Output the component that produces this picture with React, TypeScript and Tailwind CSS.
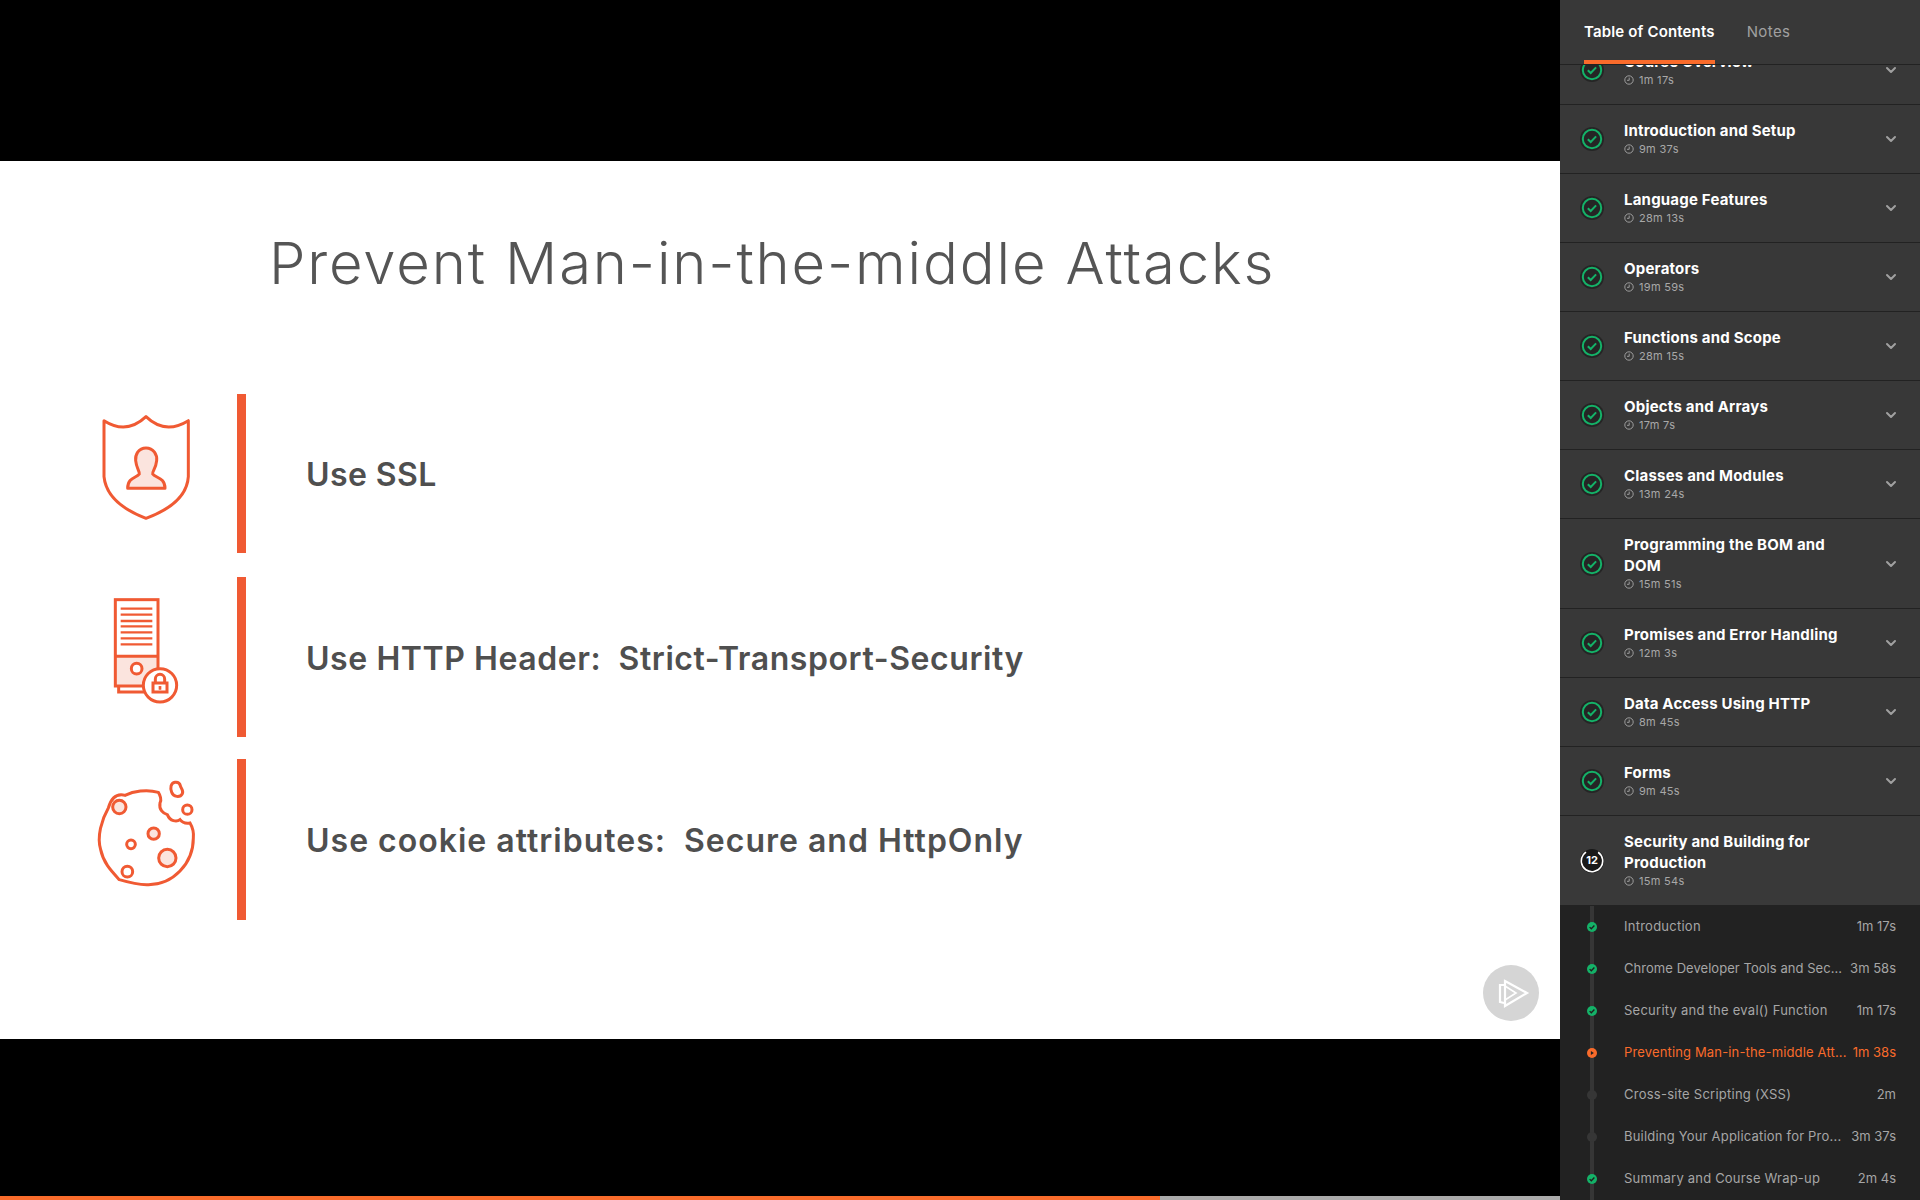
import { ChevronDown } from 'lucide-react';

const FONT = "font-['Inter','Liberation_Sans',sans-serif]";

const SECTIONS = [
  { title: 'Course Overview', time: '1m 17s' },
  { title: 'Introduction and Setup', time: '9m 37s' },
  { title: 'Language Features', time: '28m 13s' },
  { title: 'Operators', time: '19m 59s' },
  { title: 'Functions and Scope', time: '28m 15s' },
  { title: 'Objects and Arrays', time: '17m 7s' },
  { title: 'Classes and Modules', time: '13m 24s' },
  { title: 'Programming the BOM and DOM', time: '15m 51s' },
  { title: 'Promises and Error Handling', time: '12m 3s' },
  { title: 'Data Access Using HTTP', time: '8m 45s' },
  { title: 'Forms', time: '9m 45s' },
];

const CLIPS = [
  { title: 'Introduction', time: '1m 17s', state: 'done', fit: 'tracking-[0.25px]' },
  { title: 'Chrome Developer Tools and Sec...', time: '3m 58s', state: 'done', fit: 'tracking-[0.05px]' },
  { title: 'Security and the eval() Function', time: '1m 17s', state: 'done', fit: 'tracking-[0.25px]' },
  { title: 'Preventing Man-in-the-middle Att...', time: '1m 38s', state: 'current', fit: 'tracking-[0.15px]' },
  { title: 'Cross-site Scripting (XSS)', time: '2m', state: 'todo', fit: 'tracking-[0.25px]' },
  { title: 'Building Your Application for Pro...', time: '3m 37s', state: 'todo', fit: 'tracking-[0.2px]' },
  { title: 'Summary and Course Wrap-up', time: '2m 4s', state: 'done', fit: 'tracking-[0.2px]' },
];

function ClockIcon() {
  return (
    <svg width="10" height="10" viewBox="0 0 10 10" fill="none" stroke="#a8a8a8" strokeWidth="0.9" className="shrink-0">
      <circle cx="5" cy="5" r="4.2" />
      <path d="M5.2 2.6V5.3H3" />
    </svg>
  );
}

function Duration({ time }: { time: string }) {
  return (
    <div className="flex items-center gap-[5px] h-4 text-[11px] tracking-[0.3px] text-[#a8a8a8]">
      <ClockIcon />
      <span>{time}</span>
    </div>
  );
}

function SectionCheck() {
  return (
    <svg width="24" height="24" viewBox="0 0 24 24" fill="none" className="shrink-0">
      <circle cx="12" cy="12" r="12" fill="#252525" />
      <circle cx="12" cy="12" r="9.2" stroke="#14b268" strokeWidth="2" />
      <path d="M7.8 12.2l2.9 2.8 5.4-5.6" stroke="#14b268" strokeWidth="2" />
    </svg>
  );
}

function ProgressRing() {
  return (
    <div className="relative w-6 h-6 shrink-0">
      <svg width="24" height="24" viewBox="0 0 24 24" fill="none">
        <circle cx="12" cy="12" r="12" fill="#191919" />
        <circle cx="12" cy="12" r="10.7" stroke="#ffffff" strokeWidth="1.6" strokeDasharray="54 13.2" transform="rotate(-55 12 12)" />
      </svg>
      <span className="absolute inset-0 flex items-center justify-center text-[11px] font-bold text-white">12</span>
    </div>
  );
}

function ClipDot({ state }: { state: string }) {
  if (state === 'done') {
    return (
      <svg width="10" height="10" viewBox="0 0 10 10" fill="none" className="relative shrink-0">
        <circle cx="5" cy="5" r="5" fill="#14b268" />
        <path d="M2.6 5.1l1.7 1.7 3.1-3.3" stroke="#1f1f1f" strokeWidth="1.3" />
      </svg>
    );
  }
  if (state === 'current') {
    return (
      <svg width="10" height="10" viewBox="0 0 10 10" className="relative shrink-0">
        <circle cx="5" cy="5" r="5" fill="#f96b2b" />
        <path d="M3.9 3l3 2-3 2z" fill="#222222" />
      </svg>
    );
  }
  return <div className="relative w-[10px] h-[10px] rounded-full bg-[#363636] shrink-0" />;
}

function Section({ title, time, open }: { title: string; time: string; open?: boolean }) {
  return (
    <div className={`flex items-center border-b border-[#222222] ${open ? 'bg-[#393939]' : ''}`}>
      <div className="w-16 flex justify-center shrink-0">{open ? <ProgressRing /> : <SectionCheck />}</div>
      <div className="flex-1 pt-[15px] pb-4 pr-[40px]">
        <div className="text-[15px] leading-[21px] font-bold tracking-[0.2px] text-white">{title}</div>
        <Duration time={time} />
      </div>
      {!open && <ChevronDown size={16} strokeWidth={3} color="#a0a0a0" className="mr-[21px] shrink-0" />}
    </div>
  );
}

function Clip({ title, time, state, fit }: { title: string; time: string; state: string; fit: string }) {
  const color = state === 'current' ? 'text-[#f96b2b]' : 'text-[#a6a6a6]';
  return (
    <div className={`flex items-center h-[42px] text-[13px] ${color}`}>
      <div className="w-16 flex justify-center shrink-0"><ClipDot state={state} /></div>
      <span className={`flex-1 min-w-0 whitespace-nowrap ${fit}`}>{title}</span>
      <span className="ml-2 pr-6 whitespace-nowrap">{time}</span>
    </div>
  );
}

function ShieldIcon() {
  return (
    <svg width="156" height="160" viewBox="0 12 468 480" fill="none" stroke="#f05a33" strokeWidth="9" strokeLinejoin="round">
      <path d="M72 92Q140 135 198 80Q255 135 325 92V260Q320 340 198 385Q80 340 72 260Z" />
      <path fill="#fbe4de" d="M198 174C175 174 165 195 167 212C169 235 180 245 178 252C170 264 143 262 143 295H255C255 262 226 264 218 252C216 245 228 235 230 212C232 195 221 174 198 174Z" />
    </svg>
  );
}

function ServerIcon() {
  const lines = [115, 133, 152, 168, 186, 204, 222];
  return (
    <svg width="156" height="160" viewBox="0 20 468 480" fill="none" stroke="#f05a33" strokeWidth="9">
      <rect x="106" y="258" width="128" height="89" fill="#fbe4de" stroke="none" />
      <rect x="106" y="88" width="128" height="259" />
      <path d="M106 258H234M116 347V365H195" />
      {lines.map(y => <path key={y} d={`M122 ${y}H217`} strokeWidth="7" />)}
      <circle cx="170" cy="295" r="16" fill="#ffffff" />
      <circle cx="240" cy="345" r="50" fill="#ffffff" />
      <path d="M226 338V326a14 14 0 0 1 28 0V338" />
      <rect x="219" y="338" width="42" height="27" />
      <rect x="237" y="348" width="6" height="9" fill="#f05a33" strokeWidth="2" />
    </svg>
  );
}

function CookieIcon() {
  return (
    <svg width="156" height="160" viewBox="0 28 468 480" fill="none" stroke="#f05a33" strokeWidth="9">
      <path d="M235 128C200 118 160 125 135 137C115 132 95 140 85 175C65 210 50 260 62 300C70 340 95 365 118 390C145 398 170 405 200 405C280 408 340 340 340 265C342 245 336 230 330 220C318 222 306 218 300 210C290 218 270 215 262 195C250 192 236 180 240 160C246 152 240 135 235 128Z" />
      <circle cx="118" cy="172" r="20" fill="#fbe4de" />
      <circle cx="221" cy="252" r="17" fill="#fbe4de" />
      <circle cx="153" cy="284" r="13" />
      <circle cx="262" cy="325" r="26" fill="#fbe4de" />
      <circle cx="142" cy="366" r="16" />
      <circle cx="322" cy="180" r="14" />
      <path d="M285 98C272 100 270 115 275 128C280 142 300 145 307 132C312 122 302 115 301 108C299 100 292 97 285 98Z" />
    </svg>
  );
}

function Bullet({ icon, text, className, fit }: { icon: React.ReactNode; text: string; className: string; fit: string }) {
  return (
    <div className={`flex items-stretch pl-[80px] ${className}`}>
      <div className="w-[157px] shrink-0">{icon}</div>
      <div className="w-[9px] bg-[#f05a33] shrink-0" />
      <div className={`flex items-center pl-[60px] pt-[3px] text-[32px] font-semibold text-[#4f4f4f] whitespace-pre ${fit}`}>{text}</div>
    </div>
  );
}

export default function App() {
  return (
    <div className={`flex h-[1200px] w-[1920px] overflow-hidden bg-black ${FONT}`}>
      <div className="w-[1560px] shrink-0 flex flex-col">
        <div className="h-[161px] shrink-0" />
        <div className="relative h-[878px] shrink-0 bg-white">
          <h1 className="pl-[269px] pt-[62px] h-[233px] text-[58px] leading-[80px] font-light tracking-[1.85px] text-[#555555] whitespace-nowrap">Prevent Man-in-the-middle Attacks</h1>
          <Bullet icon={<ShieldIcon />} text="Use SSL" className="h-[159px]" fit="tracking-[0.4px]" />
          <Bullet icon={<ServerIcon />} text="Use HTTP Header:  Strict-Transport-Security" className="h-[160px] mt-[24px]" fit="tracking-[0.57px]" />
          <Bullet icon={<CookieIcon />} text="Use cookie attributes:  Secure and HttpOnly" className="h-[161px] mt-[22px]" fit="tracking-[1px]" />
          <svg width="56" height="56" viewBox="0 0 56 56" fill="none" className="absolute right-[21px] bottom-[18px]">
            <circle cx="28" cy="28" r="28" fill="#d5d5d5" />
            <path d="M22 16L44 28L22 41ZM21 20H17V37L21 38" stroke="#ffffff" strokeWidth="2.2" />
            <path d="M22 21L33 28L22 35" stroke="#ffffff" strokeWidth="1.6" />
          </svg>
        </div>
        <div className="flex-1" />
        <div className="h-1 shrink-0 flex bg-[#aaaaaa]">
          <div className="w-[1160px] bg-[#f96b2b]" />
        </div>
      </div>
      <aside className="w-[360px] h-[1200px] shrink-0 flex flex-col bg-[#222222]">
        <div className="relative z-10 h-[65px] shrink-0 flex gap-8 pl-6 bg-[#383838] border-b border-[#222222]">
          <div className="h-[64px] flex items-center border-b-4 border-[#f96b2b] pt-[4px] text-[15px] font-semibold tracking-[0.15px] text-white">Table of Contents</div>
          <div className="h-[64px] flex items-center text-[15px] tracking-[0.4px] text-[#a0a0a0]">Notes</div>
        </div>
        <div className="flex-1 min-h-0 overflow-hidden">
          <div className="-mt-[29px] bg-[#383838]">
            {SECTIONS.map(s => <Section key={s.title} title={s.title} time={s.time} />)}
            <Section title="Security and Building for Production" time="15m 54s" open />
          </div>
          <div className="relative">
            <div className="absolute left-[30px] top-0 bottom-0 w-1 bg-[#363636]" />
            {CLIPS.map(c => <Clip key={c.title} title={c.title} time={c.time} state={c.state} fit={c.fit} />)}
          </div>
        </div>
      </aside>
    </div>
  );
}
